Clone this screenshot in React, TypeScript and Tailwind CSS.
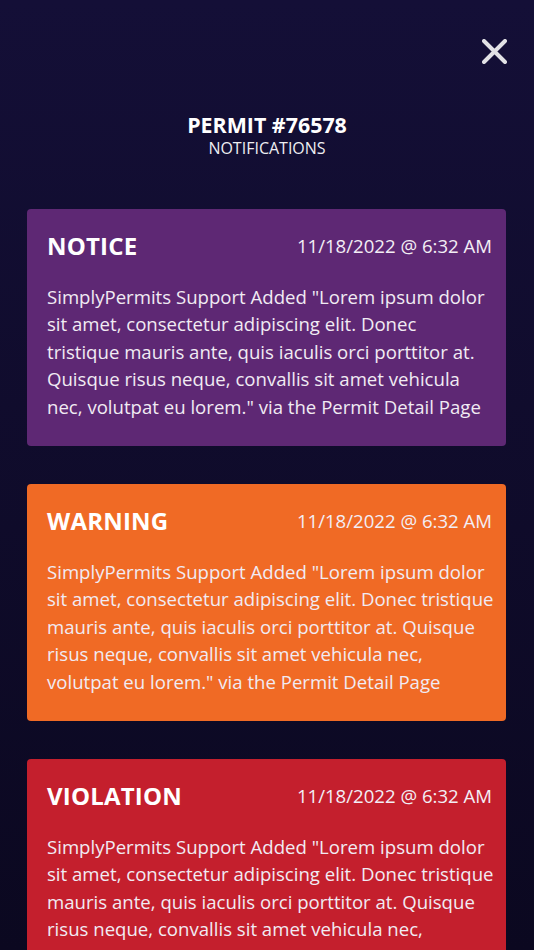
import React from "react";

const body =
  'SimplyPermits Support Added "Lorem ipsum dolor sit amet, consectetur adipiscing elit. Donec tristique mauris ante, quis iaculis orci porttitor at. Quisque risus neque, convallis sit amet vehicula nec, volutpat eu lorem." via the Permit Detail Page';

function Card({ title, bg, pclass }: { title: string; bg: string; pclass: string }) {
  return (
    <div className={`${bg} rounded-[4px] pl-[20px] pr-[14px] pt-[20px] pb-[26px] text-white`}>
      <div className="flex items-center justify-between">
        <div className="text-[24px] font-bold leading-[33px] tracking-[0.2px]">{title}</div>
        <div className="text-[18.6px] leading-[33px] text-[#f3eef5]">11/18/2022 @ 6:32 AM</div>
      </div>
      <p className={`mt-[21px] text-[18.6px] leading-[27.4px] text-[#f1ebf3] ${pclass}`}>{body}</p>
    </div>
  );
}

export default function App() {
  return (
    <div
      className="h-[950px] w-full overflow-hidden bg-gradient-to-b from-[#140f37] to-[#0b0820] text-white"
      style={{ fontFamily: '"Open Sans", "Liberation Sans", sans-serif' }}
    >
      <div className="flex justify-end pr-[27px] pt-[39px]">
        <svg width="25" height="25" viewBox="0 0 25 25">
          <path d="M2 2 L23 23 M23 2 L2 23" stroke="#e2e2e6" strokeWidth="4" strokeLinecap="round" />
        </svg>
      </div>
      <div className="mt-[47px] flex flex-col items-center">
        <div className="text-[21.4px] font-bold leading-[27px]">PERMIT #76578</div>
        <div className="text-[16px] leading-[20px] text-[#eeeef2]">NOTIFICATIONS</div>
      </div>
      <div className="mt-[51px] flex flex-col gap-[38px] pl-[27px] pr-[28px]">
        <Card title="NOTICE" bg="bg-[#5e2874]" pclass="pr-[4px]" />
        <Card title="WARNING" bg="bg-[#f06a25]" pclass="mr-[-3px]" />
        <Card title="VIOLATION" bg="bg-[#c41f2d]" pclass="mr-[-3px]" />
      </div>
    </div>
  );
}
